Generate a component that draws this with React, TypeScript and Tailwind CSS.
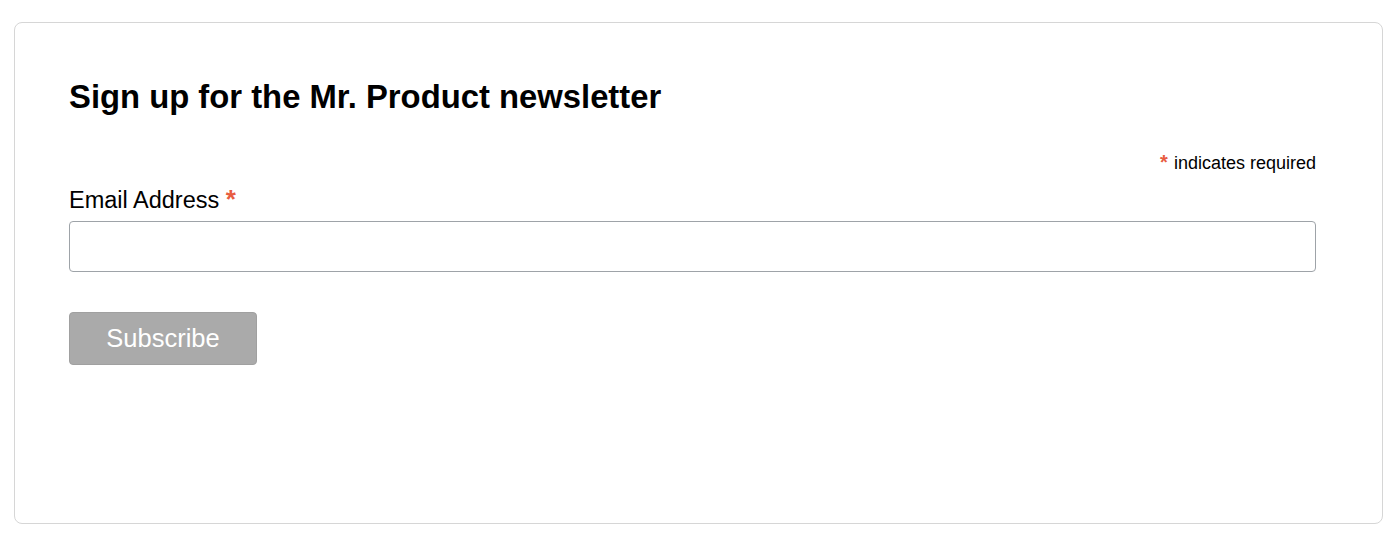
export default function App() {
  return (
    <div className="min-h-screen bg-white pt-[22px] pl-[14px] pr-[17px] font-['Liberation_Sans',Arial,sans-serif] text-black">
      <div className="h-[502px] rounded-[8px] border border-[#d6d6d6] pl-[54px] pr-[66px] pt-[54px]">
        {/* Heading */}
        <h2 className="text-[32.8px] font-bold leading-[40px]">Sign up for the Mr. Product newsletter</h2>

        {/* Required note */}
        <div className="mt-[35px] flex h-[22px] items-baseline justify-end text-[18px] leading-[22px]">
          <span className="mr-[6px] text-[20px] leading-none font-bold text-[#e85c41]">*</span>
          <span>indicates required</span>
        </div>

        {/* Email field */}
        <label className="mt-[12px] block h-[28px] text-[23.5px] leading-[28px]">
          Email Address <span className="text-[26px] leading-none font-bold text-[#e85c41]">*</span>
        </label>
        <input
          type="email"
          className="mt-[7px] block h-[51px] w-full rounded-[4px] border border-[#9ea3a8] bg-white px-3 outline-none"
        />

        {/* Submit */}
        <button className="mt-[40px] h-[53px] w-[188px] rounded-[4px] border border-[#a0a0a0] bg-[#aaaaaa] text-[25.5px] text-white">
          Subscribe
        </button>
      </div>
    </div>
  );
}
